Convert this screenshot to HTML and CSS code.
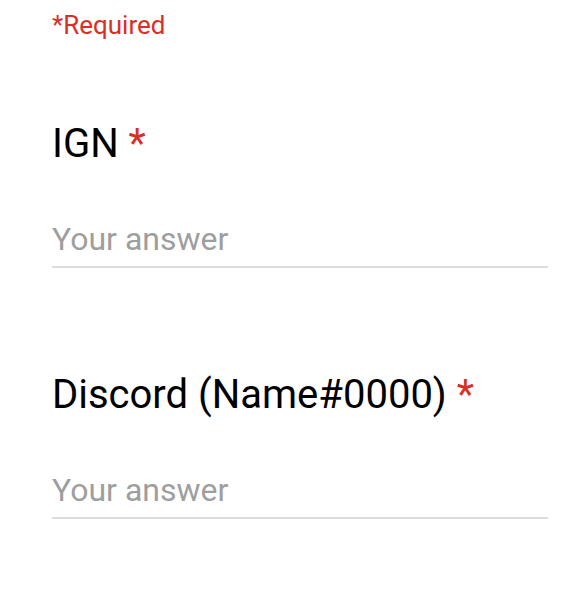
FILE: index.html
```html
<!DOCTYPE html>
<html>
<head>
<meta charset="utf-8">
<link rel="stylesheet" href="styles.css">
</head>
<body>
<div class="form">
  <div class="required-note">*Required</div>
  <div class="question">
    <div class="title">IGN <span class="star">*</span></div>
    <div class="answer">Your answer</div>
  </div>
  <div class="question">
    <div class="title">Discord (Name#0000) <span class="star">*</span></div>
    <div class="answer">Your answer</div>
  </div>
</div>
</body>
</html>
```
FILE: styles.css
```css
html, body {
  margin: 0;
  padding: 0;
  background: #ffffff;
}
body {
  font-family: Roboto, "Liberation Sans", sans-serif;
}
.form {
  padding: 10px 34px 0 52px;
}
.required-note {
  color: #d93025;
  font-size: 26px;
  line-height: 30px;
}
.question {
  margin-top: 80px;
}
.question + .question {
  margin-top: 103px;
}
.title {
  color: #000000;
  font-size: 40px;
  line-height: 48px;
}
.star {
  color: #d93025;
}
.answer {
  margin-top: 51px;
  color: #9e9e9e;
  font-size: 32px;
  line-height: 40px;
  padding-bottom: 7px;
  border-bottom: 2px solid #dcdcdc;
}
```
